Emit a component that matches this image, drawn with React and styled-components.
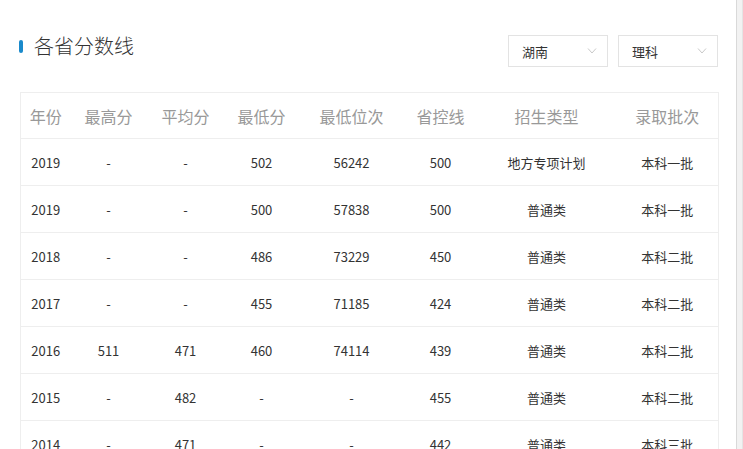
import styled, { createGlobalStyle } from 'styled-components';

const GlobalStyle = createGlobalStyle`
  html, body {
    margin: 0;
    padding: 0;
    background: #fff;
    overflow: hidden;
  }
  body {
    font-family: "Noto Sans CJK SC", "Noto Sans", sans-serif;
  }
`;

const Page = styled.div`
  display: flex;
  width: 743px;
  height: 449px;
  overflow: hidden;
`;

const Main = styled.div`
  width: 736px;
  padding: 35px 18px 0 20px;
  box-sizing: border-box;
`;

const Edge = styled.div`
  flex: 1;
  background: #f2f2f2;
  border-left: 1px solid #d9d9d9;
  border-right: 1px solid #e4e4e4;
`;

const Header = styled.div`
  display: flex;
  align-items: flex-start;
  justify-content: space-between;
  height: 32px;
`;

const Title = styled.h2`
  display: flex;
  align-items: center;
  gap: 11px;
  margin: -3px 0 0 -1px;
  font-size: 20px;
  line-height: 28px;
  font-weight: 300;
  color: #333;
  &::before {
    content: '';
    display: block;
    width: 4px;
    height: 13px;
    border-radius: 2px;
    background: #1a8acb;
  }
`;

const Selects = styled.div`
  display: flex;
  gap: 10px;
`;

const Select = styled.div`
  display: flex;
  align-items: center;
  justify-content: space-between;
  width: 100px;
  height: 32px;
  padding: 0 10px 0 13px;
  box-sizing: border-box;
  border: 1px solid #e3e3e3;
  font-size: 13px;
  color: #333;
`;

const Chevron = () => (
  <svg width="10" height="6" viewBox="0 0 10 6" fill="none" stroke="#c8c8c8" strokeWidth="1">
    <path d="M1 0.5 5 5 9 0.5" />
  </svg>
);

const Table = styled.table`
  margin-top: 25px;
  width: 698px;
  border-collapse: collapse;
  table-layout: fixed;
  border: 1px solid #eee;
`;

const Th = styled.th`
  height: 45px;
  padding: 0;
  font-size: 16px;
  font-weight: 400;
  color: #999;
  text-align: center;
  border-bottom: 1px solid #eee;
`;

const Td = styled.td`
  height: 46px;
  padding: 0;
  font-size: 13px;
  color: #333;
  text-align: center;
  border-bottom: 1px solid #eee;
`;

const columns = [
  { label: '年份', width: 50 },
  { label: '最高分', width: 76 },
  { label: '平均分', width: 78 },
  { label: '最低分', width: 74 },
  { label: '最低位次', width: 106 },
  { label: '省控线', width: 72 },
  { label: '招生类型', width: 140 },
  { label: '录取批次', width: 102 },
];

const rows = [
  ['2019', '-', '-', '502', '56242', '500', '地方专项计划', '本科一批'],
  ['2019', '-', '-', '500', '57838', '500', '普通类', '本科一批'],
  ['2018', '-', '-', '486', '73229', '450', '普通类', '本科二批'],
  ['2017', '-', '-', '455', '71185', '424', '普通类', '本科二批'],
  ['2016', '511', '471', '460', '74114', '439', '普通类', '本科二批'],
  ['2015', '-', '482', '-', '-', '455', '普通类', '本科二批'],
  ['2014', '-', '471', '-', '-', '442', '普通类', '本科三批'],
];

const App = () => (
  <>
    <GlobalStyle />
    <Page>
      <Main>
        <Header>
          <Title>各省分数线</Title>
          <Selects>
            <Select>
              湖南
              <Chevron />
            </Select>
            <Select>
              理科
              <Chevron />
            </Select>
          </Selects>
        </Header>
        <Table>
          <colgroup>
            {columns.map((c) => (
              <col key={c.label} style={{ width: c.width }} />
            ))}
          </colgroup>
          <thead>
            <tr>
              {columns.map((c) => (
                <Th key={c.label}>{c.label}</Th>
              ))}
            </tr>
          </thead>
          <tbody>
            {rows.map((r, i) => (
              <tr key={i}>
                {r.map((v, j) => (
                  <Td key={j}>{v}</Td>
                ))}
              </tr>
            ))}
          </tbody>
        </Table>
      </Main>
      <Edge />
    </Page>
  </>
);

export default App;
